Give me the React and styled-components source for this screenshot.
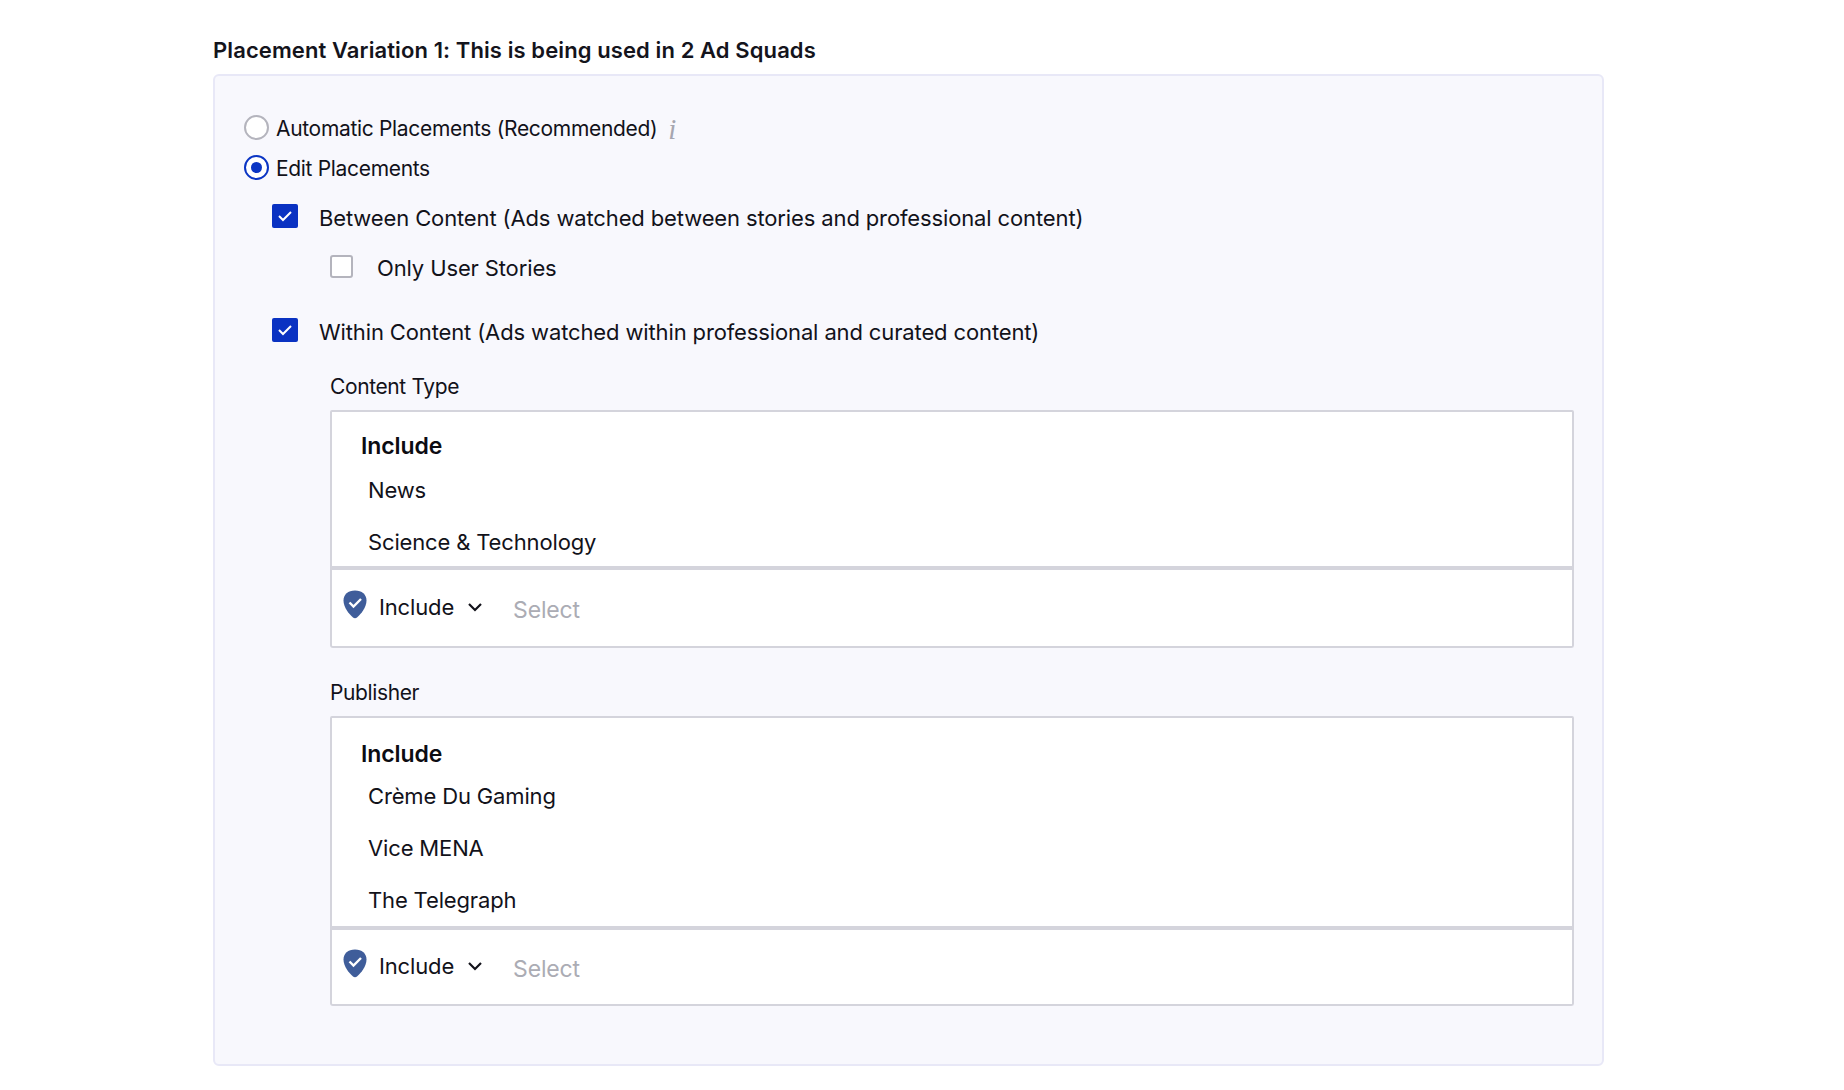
import React from 'react';
import styled, { createGlobalStyle } from 'styled-components';

const GlobalStyle = createGlobalStyle`
  html, body { margin: 0; padding: 0; background: #fff; }
  body { font-family: Inter, "Liberation Sans", sans-serif; color: #12121a; }
`;

const Page = styled.div`
  width: 1391px;
  margin-left: 213px;
  padding-top: 36px;
`;

const Title = styled.h2`
  margin: 0 0 10px;
  font-size: 22px;
  line-height: 28px;
  font-weight: 600;
  letter-spacing: 0.1px;
  color: #14141c;
`;

const Panel = styled.div`
  box-sizing: border-box;
  height: 992px;
  padding: 32px 28px 0 29px;
  background: #f8f8fd;
  border: 2px solid #e8e8f7;
  border-radius: 6px;
`;

const RadioRow = styled.label`
  display: flex;
  align-items: center;
  height: 40px;
  gap: 7px;
  font-size: 21px;
  letter-spacing: -0.32px;
`;

const Radio = styled.span`
  box-sizing: border-box;
  width: 25px;
  height: 25px;
  margin-bottom: 2px;
  border-radius: 50%;
  background: #fff;
  border: 2px solid ${p => (p.$on ? '#0b35c4' : '#b4b4bd')};
  display: flex;
  align-items: center;
  justify-content: center;
  &::after {
    content: '';
    display: ${p => (p.$on ? 'block' : 'none')};
    width: 11px;
    height: 11px;
    border-radius: 50%;
    background: #0b35c4;
  }
`;

const InfoMark = styled.span`
  margin-left: 4px;
  margin-top: 3px;
  font-family: "Liberation Serif", serif;
  font-style: italic;
  font-size: 29px;
  line-height: 1;
  color: #a6a6b0;
`;

const CheckRow = styled.label`
  display: flex;
  align-items: center;
  height: 42px;
  margin-left: ${p => (p.$nested ? '86px' : '28px')};
  gap: ${p => (p.$nested ? '24px' : '21px')};
  margin-top: ${p => p.$top || 0}px;
  font-size: 22px;
  letter-spacing: -0.13px;
`;

const Box = styled.span`
  box-sizing: border-box;
  width: ${p => (p.$on ? '26px' : '23px')};
  height: ${p => (p.$on ? '24px' : '23px')};
  margin-bottom: 4px;
  border-radius: ${p => (p.$on ? '2px' : '3px')};
  background: ${p => (p.$on ? '#0a32c2' : '#fff')};
  border: ${p => (p.$on ? 'none' : '2px solid #b4b4bd')};
  display: flex;
  align-items: center;
  justify-content: center;
`;

const Section = styled.div`
  margin-left: 86px;
  margin-top: ${p => p.$top}px;
`;

const FieldLabel = styled.div`
  font-size: 21px;
  letter-spacing: -0.38px;
  line-height: 26px;
  margin-bottom: ${p => p.$gap}px;
`;

const ListBox = styled.div`
  box-sizing: border-box;
  height: ${p => p.$height}px;
  padding: ${p => p.$pad}px 29px 0;
  background: #fff;
  border: 2px solid #d4d4dc;
  border-bottom-width: 4px;
  border-radius: 2px 2px 0 0;
`;

const ListHead = styled.div`
  font-size: 23px;
  line-height: 28px;
  font-weight: 600;
  letter-spacing: -0.1px;
  color: #0c0c12;
`;

const ListItem = styled.div`
  height: 52px;
  padding-left: 7px;
  display: flex;
  align-items: center;
  font-size: 22px;
  letter-spacing: -0.15px;
`;

const Items = styled.div`
  margin-top: ${p => p.$top}px;
`;

const SelectBar = styled.div`
  box-sizing: border-box;
  height: ${p => p.$height}px;
  padding: 0 0 2px 11px;
  display: flex;
  align-items: center;
  background: #fff;
  border: 2px solid #d4d4dc;
  border-top: none;
  border-radius: 0 0 3px 3px;
  font-size: 22px;
  letter-spacing: -0.15px;
`;

const Shield = styled.svg`
  width: 24px;
  height: 29px;
  margin-right: 12px;
  margin-top: -6px;
`;

const Chevron = styled.svg`
  width: 16px;
  height: 10px;
  margin-left: 13px;
  margin-right: 30px;
`;

const Placeholder = styled.span`
  color: #abacb4;
  font-size: 23px;
  margin-top: 6px;
`;

const Check = () => (
  <svg width="16" height="12" viewBox="0 0 16 12" fill="none">
    <path d="M2 6 6 10 14 2" stroke="#fff" strokeWidth="2" />
  </svg>
);

const IncludeSelect = ({ height }) => (
  <SelectBar $height={height}>
    <Shield viewBox="0 0 24 29">
      <path d="M12 .5C5 .5.5 4.500.5 10.500c0 7 5.500 13.500 9.500 17 1.200 1 2.800 1 4 0 4-3.500 9.500-10 9.500-17C23.500 4.500 19 .5 12 .5Z" fill="#3f5d9a" />
      <path d="M6.500 12.500 10.500 16.500 18 9" stroke="#fff" strokeWidth="2.400" fill="none" />
    </Shield>
    Include
    <Chevron viewBox="0 0 16 10">
      <path d="M2 2 8 8 14 2" stroke="#12121a" strokeWidth="2.200" fill="none" />
    </Chevron>
    <Placeholder>Select</Placeholder>
  </SelectBar>
);

export default function App() {
  return (
    <>
      <GlobalStyle />
      <Page>
        <Title>Placement Variation 1: This is being used in 2 Ad Squads</Title>
        <Panel>
          <RadioRow>
            <Radio />
            Automatic Placements (Recommended)
            <InfoMark>i</InfoMark>
          </RadioRow>
          <RadioRow>
            <Radio $on />
            Edit Placements
          </RadioRow>
          <CheckRow $top={9}>
            <Box $on><Check /></Box>
            Between Content (Ads watched between stories and professional content)
          </CheckRow>
          <CheckRow $nested $top={8}>
            <Box />
            Only User Stories
          </CheckRow>
          <CheckRow $top={22}>
            <Box $on><Check /></Box>
            Within Content (Ads watched within professional and curated content)
          </CheckRow>
          <Section $top={21}>
            <FieldLabel $gap={10}>Content Type</FieldLabel>
            <ListBox $height={160} $pad={20}>
              <ListHead>Include</ListHead>
              <Items $top={4}>
                <ListItem>News</ListItem>
                <ListItem>Science &amp; Technology</ListItem>
              </Items>
            </ListBox>
            <IncludeSelect height={78} />
          </Section>
          <Section $top={32}>
            <FieldLabel $gap={10}>Publisher</FieldLabel>
            <ListBox $height={214} $pad={22}>
              <ListHead>Include</ListHead>
              <Items $top={2}>
                <ListItem>Crème Du Gaming</ListItem>
                <ListItem>Vice MENA</ListItem>
                <ListItem>The Telegraph</ListItem>
              </Items>
            </ListBox>
            <IncludeSelect height={76} />
          </Section>
        </Panel>
      </Page>
    </>
  );
}
